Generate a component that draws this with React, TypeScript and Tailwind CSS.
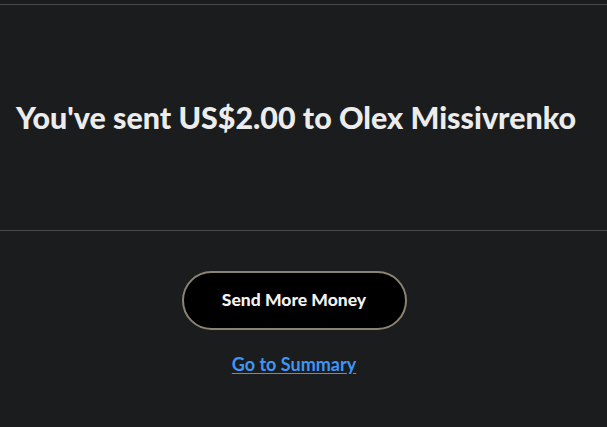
export default function App() {
  return (
    <div className="h-[427px] w-full overflow-hidden bg-[#1b1c1e] font-['Lato',sans-serif]">
      <div className="h-[4px]" />
      <div className="flex h-[227px] items-center border-y border-[#4a4a4c] px-4">
        <h1 className="text-[30.4px] font-black text-[#ececec]">
          You've sent US$2.00 to Olex Missivrenko
        </h1>
      </div>
      <div className="flex flex-col items-center pt-[40px] pr-[19px]">
        <button className="h-[59px] w-[225px] rounded-full border-2 border-[#8c8473] bg-black text-[17.5px] font-black text-[#f2f2f2]">
          Send More Money
        </button>
        <a href="#" className="mt-[21px] text-[18px] font-bold text-[#3f96f5] underline underline-offset-2">
          Go to Summary
        </a>
      </div>
    </div>
  );
}
